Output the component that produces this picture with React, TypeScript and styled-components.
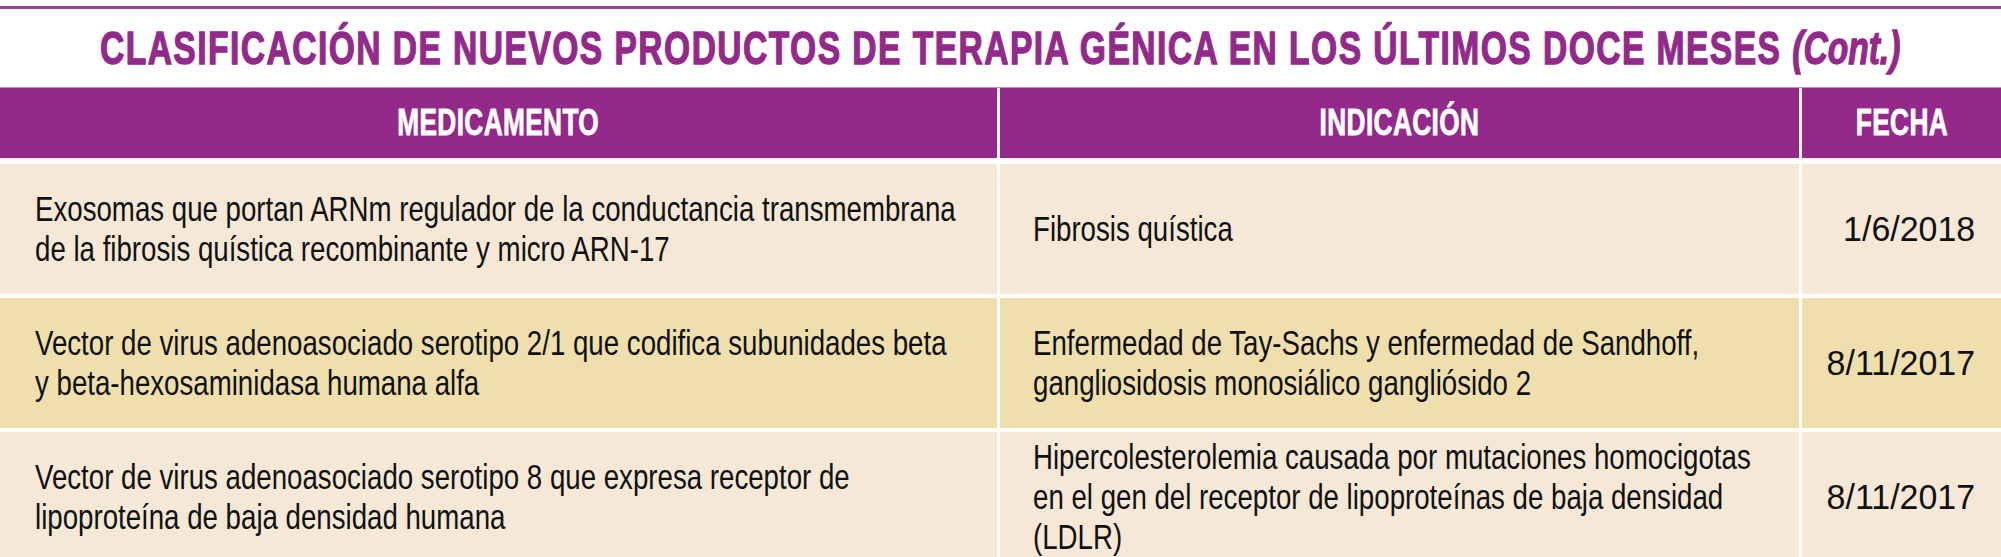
import React from 'react';
import styled, {createGlobalStyle} from 'styled-components';

type RowData = {
  medicamento: string[];
  indicacion: string[];
  fecha: string;
  tone: 'light' | 'dark';
};

const rows: RowData[] = [
  {
    medicamento: [
      'Exosomas que portan ARNm regulador de la conductancia transmembrana',
      'de la fibrosis quística recombinante y micro ARN-17',
    ],
    indicacion: ['Fibrosis quística'],
    fecha: '1/6/2018',
    tone: 'light',
  },
  {
    medicamento: [
      'Vector de virus adenoasociado serotipo 2/1 que codifica subunidades beta',
      'y beta-hexosaminidasa humana alfa',
    ],
    indicacion: [
      'Enfermedad de Tay-Sachs y enfermedad de Sandhoff,',
      'gangliosidosis monosiálico gangliósido 2',
    ],
    fecha: '8/11/2017',
    tone: 'dark',
  },
  {
    medicamento: [
      'Vector de virus adenoasociado serotipo 8 que expresa receptor de',
      'lipoproteína de baja densidad humana',
    ],
    indicacion: [
      'Hipercolesterolemia causada por mutaciones homocigotas',
      'en el gen del receptor de lipoproteínas de baja densidad',
      '(LDLR)',
    ],
    fecha: '8/11/2017',
    tone: 'light',
  },
];

const App = () => {
  return (
    <>
      <GlobalStyle />
      <Page>
        <TopRule />
        <TitleBar>
          <Title>
            CLASIFICACIÓN DE NUEVOS PRODUCTOS DE TERAPIA GÉNICA EN LOS ÚLTIMOS
            DOCE MESES <Cont>(Cont.)</Cont>
          </Title>
        </TitleBar>
        <Table>
          <HeaderRow>
            <HeadCell>
              <HeadLabel>MEDICAMENTO</HeadLabel>
            </HeadCell>
            <HeadCell>
              <HeadLabel>INDICACIÓN</HeadLabel>
            </HeadCell>
            <HeadCell>
              <HeadLabel>FECHA</HeadLabel>
            </HeadCell>
          </HeaderRow>
          <Body>
            {rows.map((row, index) => {
              return (
                <BodyRow key={index}>
                  <Cell tone={row.tone} $padLeft={35}>
                    <Lines>
                      {row.medicamento.map((line, i) => (
                        <span key={i}>{line}</span>
                      ))}
                    </Lines>
                  </Cell>
                  <Cell tone={row.tone} $padLeft={33}>
                    <Lines>
                      {row.indicacion.map((line, i) => (
                        <span key={i}>{line}</span>
                      ))}
                    </Lines>
                  </Cell>
                  <DateCell tone={row.tone}>
                    <DateText>{row.fecha}</DateText>
                  </DateCell>
                </BodyRow>
              );
            })}
          </Body>
        </Table>
      </Page>
    </>
  );
};
export default App;

const GlobalStyle = createGlobalStyle`
  html, body {
    margin: 0;
    padding: 0;
    background: #fff;
  }
  body {
    font-family: "Liberation Sans", Arial, sans-serif;
  }
`;

const Page = styled.div`
  width: 2001px;
  height: 557px;
  overflow: hidden;
  background: #fff;
`;

const TopRule = styled.div`
  height: 3px;
  margin-top: 6px;
  background-color: #9c4098;
`;

const TitleBar = styled.div`
  height: 78px;
  display: flex;
  align-items: center;
  justify-content: center;
`;

/* no condensed face is installed, so the narrow type is squeezed horizontally */
const Title = styled.h1`
  margin: 0;
  flex-shrink: 0;
  font-size: 46px;
  font-weight: 700;
  letter-spacing: 2px;
  color: #93298a;
  -webkit-text-stroke: 1.3px #93298a;
  white-space: nowrap;
  transform: scaleX(0.73);
  transform-origin: center;
`;

const Cont = styled.span`
  font-style: italic;
  letter-spacing: 0;
`;

const Table = styled.div`
  display: flex;
  flex-flow: column;
`;

const columns = `
  display: grid;
  grid-template-columns: 997px 799px 1fr;
  column-gap: 3px;
`;

const HeaderRow = styled.div`
  ${columns}
  height: 70px;
  border-top: 1px solid #c48fc0;
  margin-bottom: 6px;
`;

const HeadCell = styled.div`
  display: flex;
  align-items: center;
  justify-content: center;
  background-color: #93298a;
  overflow: hidden;
`;

const HeadLabel = styled.span`
  flex-shrink: 0;
  color: #fff;
  font-size: 37px;
  font-weight: 700;
  letter-spacing: 0.5px;
  -webkit-text-stroke: 0.8px #fff;
  white-space: nowrap;
  transform: scaleX(0.71);
`;

const Body = styled.div`
  display: flex;
  flex-flow: column;
  gap: 4px;
`;

const BodyRow = styled.div`
  ${columns}
  height: 130px;
`;

const toneColor = (tone: 'light' | 'dark') =>
  tone === 'dark' ? '#efdfad' : '#f5e8d6';

const Cell = styled.div<{tone: 'light' | 'dark'; $padLeft: number}>`
  display: flex;
  align-items: center;
  padding-left: ${({$padLeft}) => $padLeft}px;
  background-color: ${({tone}) => toneColor(tone)};
  overflow: hidden;
`;

const Lines = styled.div`
  display: flex;
  flex-flow: column;
  flex-shrink: 0;
  white-space: nowrap;
  color: #111;
  font-size: 35px;
  line-height: 40px;
  transform: scaleX(0.79);
  transform-origin: left center;
`;

const DateCell = styled.div<{tone: 'light' | 'dark'}>`
  display: flex;
  align-items: center;
  justify-content: flex-end;
  padding-right: 26px;
  background-color: ${({tone}) => toneColor(tone)};
`;

const DateText = styled.span`
  color: #111;
  font-size: 35px;
  line-height: 40px;
  white-space: nowrap;
  transform: scaleX(0.97);
  transform-origin: right center;
`;
